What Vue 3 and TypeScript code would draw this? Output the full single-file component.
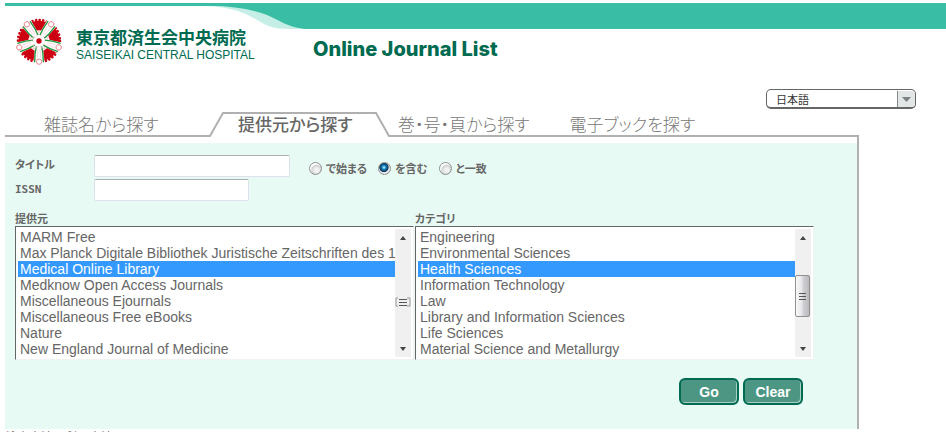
<script setup lang="ts">
import { ref } from 'vue'

const tabs = ['雑誌名から探す', '提供元から探す', '巻・号・頁から探す', '電子ブックを探す']
const activeTab = 1

const matchModes = [
  { value: 'starts', label: 'で始まる' },
  { value: 'contains', label: 'を含む' },
  { value: 'exact', label: 'と一致' },
]

const title = ref('')
const issn = ref('')
const match = ref('contains')
const provider = ref('Medical Online Library')
const category = ref('Health Sciences')

const providers = [
  'MARM Free',
  'Max Planck Digitale Bibliothek Juristische Zeitschriften des 19',
  'Medical Online Library',
  'Medknow Open Access Journals',
  'Miscellaneous Ejournals',
  'Miscellaneous Free eBooks',
  'Nature',
  'New England Journal of Medicine',
]
const categories = [
  'Engineering',
  'Environmental Sciences',
  'Health Sciences',
  'Information Technology',
  'Law',
  'Library and Information Sciences',
  'Life Sciences',
  'Material Science and Metallurgy',
]

const petals = [0, 72, 144, 216, 288]

function clearForm(): void {
  title.value = ''
  issn.value = ''
  match.value = 'contains'
}
</script>

<template>
  <div class="page">
    <header class="header">
      <div class="banner" aria-hidden="true">
        <svg class="swoosh" width="300" height="26" viewBox="0 0 300 26">
          <path d="M200 3C228 4 240 10 252 17C262 23 268 26 284 26H300V0H200Z" fill="#c5efe6" />
          <path d="M0 0H300V26C282 24 274 17 262 12C245 6 228 3 205 3H0Z" fill="#39bda4" />
        </svg>
        <div class="bar"></div>
      </div>
      <div class="brand">
        <svg class="emblem" width="48" height="48" viewBox="-72 -72 144 144" aria-hidden="true">
          <circle r="61" fill="#cc0010" />
          <circle r="63" fill="none" stroke="#cc0010" stroke-width="8" stroke-linecap="round" stroke-dasharray="0.1 10.9" />
          <circle r="32" fill="#fff" />
          <g v-for="angle in petals" :key="angle" :transform="`rotate(${angle})`">
            <path d="M-12 20L-17 66Q0 80 17 66L12 20Z" fill="#fff" />
            <path d="M-8 16Q-13 36 -13 64M8 16Q13 36 13 64" fill="none" stroke="#20963c" stroke-width="4" />
            <path d="M-3 24L-5 50M3 24L5 50" fill="none" stroke="#f4b3b8" stroke-width="1.5" />
            <path d="M-8 -15L0 -30L8 -15" fill="none" stroke="#f4b3b8" stroke-width="2" />
            <circle cy="62" r="8" fill="#fff" stroke="#e8707c" stroke-width="2.5" />
          </g>
          <circle r="8" fill="#cc0010" />
        </svg>
        <div class="names">
          <span class="name-ja">東京都済生会中央病院</span>
          <span class="name-en">SAISEIKAI CENTRAL HOSPITAL</span>
        </div>
        <h1>Online Journal List</h1>
      </div>
    </header>

    <div class="language">
      <select aria-label="言語">
        <option>日本語</option>
      </select>
      <svg class="language-arrow" width="17" height="16" viewBox="0 0 17 16" aria-hidden="true">
        <path d="M4 6H13L8.500 11Z" fill="#7d8282" />
      </svg>
    </div>

    <main class="content">
      <nav class="tabs">
        <template v-for="(tab, i) in tabs" :key="tab">
          <svg v-if="i === activeTab" class="edge" width="15" height="25" viewBox="0 0 15 25" aria-hidden="true">
            <path d="M0 24H1L14 1H15" fill="none" stroke="#b0b0b0" stroke-width="2" />
          </svg>
          <a href="#" class="tab" :class="{ active: i === activeTab }">{{ tab }}</a>
          <svg v-if="i === activeTab" class="edge" width="15" height="25" viewBox="0 0 15 25" aria-hidden="true">
            <path d="M0 1H1L14 24H15" fill="none" stroke="#b0b0b0" stroke-width="2" />
          </svg>
        </template>
        <span class="tab-rest"></span>
      </nav>

      <form class="panel" @submit.prevent>
        <div class="row">
          <label class="caption" for="title">タイトル</label>
          <input id="title" v-model="title" class="field wide" type="text" />
          <div class="modes">
            <label v-for="mode in matchModes" :key="mode.value" class="mode">
              <input v-model="match" type="radio" name="match" :value="mode.value" />
              {{ mode.label }}
            </label>
          </div>
        </div>
        <div class="row">
          <label class="caption issn" for="issn">ISSN</label>
          <input id="issn" v-model="issn" class="field" type="text" />
        </div>

        <div class="lists">
          <div class="list">
            <label for="provider">提供元</label>
            <div class="box">
              <select id="provider" v-model="provider" size="8">
                <option v-for="name in providers" :key="name" :value="name">{{ name }}</option>
              </select>
              <svg class="scroll" width="16" height="128" viewBox="0 0 16 128" aria-hidden="true">
                <rect width="16" height="128" fill="#f0f0f0" />
                <path d="M5 11L8 7L11 11ZM5 118L8 122L11 118Z" fill="#444" />
                <path d="M3 69H1V77H3M12 69H15V77H12" fill="none" stroke="#999" />
                <path d="M4 70.500H12M4 73.500H12M4 76.500H12" stroke="#555" />
              </svg>
            </div>
          </div>
          <div class="list">
            <label for="category">カテゴリ</label>
            <div class="box">
              <select id="category" v-model="category" size="8">
                <option v-for="name in categories" :key="name" :value="name">{{ name }}</option>
              </select>
              <svg class="scroll" width="16" height="128" viewBox="0 0 16 128" aria-hidden="true">
                <defs>
                  <linearGradient id="thumb">
                    <stop offset="0" stop-color="#fafafa" />
                    <stop offset="0.450" stop-color="#e6e6e8" />
                    <stop offset="0.550" stop-color="#d0d0d4" />
                    <stop offset="1" stop-color="#b8b8bc" />
                  </linearGradient>
                </defs>
                <rect width="16" height="128" fill="#f0f0f0" />
                <path d="M5 11L8 7L11 11ZM5 118L8 122L11 118Z" fill="#444" />
                <rect x="0.500" y="46.500" width="14" height="41" rx="1.500" fill="url(#thumb)" stroke="#909090" />
                <path d="M4 64.500H11M4 67.500H11M4 70.500H11" stroke="#555" />
              </svg>
            </div>
          </div>
        </div>

        <div class="actions">
          <button type="submit">Go</button>
          <button type="button" @click="clearForm">Clear</button>
        </div>
      </form>
      <p class="note">検索方法・利用方法について</p>
    </main>
  </div>
</template>

<style>
html {
  overflow: hidden;
  background: #fff;
}
</style>

<style scoped>
.page {
  padding: 3px 0 0 5px;
  font-family: "Liberation Sans", "Noto Sans CJK JP", sans-serif;
  color: #666;
}

.header {
  display: grid;
}

.banner,
.brand {
  grid-area: 1 / 1;
}

.banner {
  display: flex;
  height: 26px;
}

.swoosh {
  flex: none;
}

.bar {
  flex: 1;
  background: #39bda4;
}

.brand {
  display: flex;
  align-items: flex-start;
  padding: 14px 0 0 10px;
  color: #006b50;
}

.emblem {
  flex: none;
}

.names {
  display: flex;
  flex: none;
  flex-direction: column;
  width: 236px;
  padding: 8px 0 0 13px;
  box-sizing: border-box;
  white-space: nowrap;
}

.name-ja {
  font: bold 17px/24px "Noto Sans CJK JP", sans-serif;
}

.name-en {
  font-size: 12px;
  line-height: 12px;
}

h1 {
  margin: 20px 0 0 14px;
  font: 800 20px/24px Inter, sans-serif;
}

.language {
  display: grid;
  justify-content: end;
  grid-template-columns: 150px;
  margin: 24px 30px 0 0;
}

.language select {
  grid-area: 1 / 1;
  height: 20px;
  padding: 0 24px 0 9px;
  appearance: none;
  border: 1px solid #666;
  border-bottom-width: 2px;
  border-radius: 5px;
  background: #fff;
  color: #333;
  font: 11px/16px "Noto Sans CJK JP", sans-serif;
}

.language-arrow {
  grid-area: 1 / 1;
  place-self: center end;
  margin-right: 1px;
  border-left: 1px solid #888;
  border-radius: 0 3px 3px 0;
  background: #e2e6e6;
  pointer-events: none;
}

.content {
  max-width: 854px;
}

.tabs {
  display: flex;
  height: 25px;
  margin-top: 3px;
}

.tab {
  flex: none;
  box-sizing: border-box;
  border-bottom: 2px solid #b0b0b0;
  padding: 0 32px 0 8px;
  color: #777;
  font: 300 17px/24px "Noto Sans CJK JP", sans-serif;
  font-feature-settings: "palt";
  text-decoration: none;
  white-space: nowrap;
}

.tab:first-child {
  width: 204px;
  padding-left: 39px;
}

.tab.active {
  width: 151px;
  padding: 0 0 0 14px;
  border-top: 2px solid #b0b0b0;
  border-bottom: 0;
  color: #666;
  font-weight: 500;
  line-height: 20px;
}

.edge {
  flex: none;
}

.tab-rest {
  flex: 1;
  border-bottom: 2px solid #b0b0b0;
}

.panel {
  border-right: 2px solid #b0b0b0;
  padding: 17px 43px 24px 10px;
  background: linear-gradient(#fff 6px, #e8faf4 6px);
}

.row {
  display: flex;
  align-items: center;
  height: 24px;
}

.caption,
.mode,
.list label {
  font: bold 11px/16px "Noto Sans CJK JP", sans-serif;
  font-feature-settings: "palt";
}

.caption {
  width: 79px;
  padding-bottom: 4px;
}

.caption.issn {
  padding: 0;
  font: bold 11px/16px "DejaVu Sans Mono", monospace;
}

.field {
  box-sizing: border-box;
  width: 155px;
  height: 22px;
  margin: 0;
  border: 1px solid #dde2ea;
  border-top-color: #abadb3;
  border-radius: 2px;
  padding: 1px 3px;
  background: #fff;
}

.field.wide {
  width: 196px;
}

.modes {
  display: flex;
  gap: 11px;
  margin-left: 19px;
  padding-top: 4px;
}

.mode {
  display: flex;
  align-items: center;
  gap: 4px;
}

.mode input {
  width: 13px;
  height: 13px;
  margin: 0;
  appearance: none;
  border: 1px solid #8e8f8f;
  border-radius: 50%;
  background: radial-gradient(circle at 60% 65%, #f2f2f2 20%, #cfd2d4 50%, #fff 62%);
}

.mode input:checked {
  background: radial-gradient(circle at 45% 40%, #8edcf7 8%, #1a80b8 22%, #0b3557 48%, #e4e8ea 56%);
}

.lists {
  display: grid;
  grid-template-columns: 1fr 1fr;
  gap: 1px;
  margin-top: 8px;
}

.list {
  display: flex;
  flex-direction: column;
  min-width: 0;
}

.box {
  display: flex;
  border: 1px solid #f0f3f2;
  border-top: 1px solid #666;
  border-left: 1px solid #666;
  padding: 2px;
  background: #fff;
}

.box select {
  flex: 1;
  min-width: 0;
  height: 128px;
  margin: 0;
  border: 0;
  border-radius: 0;
  padding: 0;
  overflow: hidden;
  outline: none;
  background: #fff;
  color: #666;
  font: 14px/16px "Liberation Sans", sans-serif;
}

.box option {
  min-height: 16px;
  height: 16px;
  padding: 0 2px;
  line-height: 16px;
}

.box option:checked {
  background: #3399ff linear-gradient(#3399ff, #3399ff);
  color: #fff;
}

.scroll {
  flex: none;
}

.actions {
  display: flex;
  justify-content: flex-end;
  gap: 4px;
  margin-top: 18px;
  padding-right: 11px;
}

.actions button {
  width: 60px;
  height: 27px;
  border: 2px solid #006b50;
  border-radius: 6px;
  padding: 0;
  background: #4c9683;
  box-shadow: inset -1px -1px 0 #a9d0c4;
  color: #fff;
  font: bold 14px/20px "Liberation Sans", sans-serif;
}

.note {
  margin: 0;
  font: 12px/16px "Noto Sans CJK JP", sans-serif;
}
</style>
